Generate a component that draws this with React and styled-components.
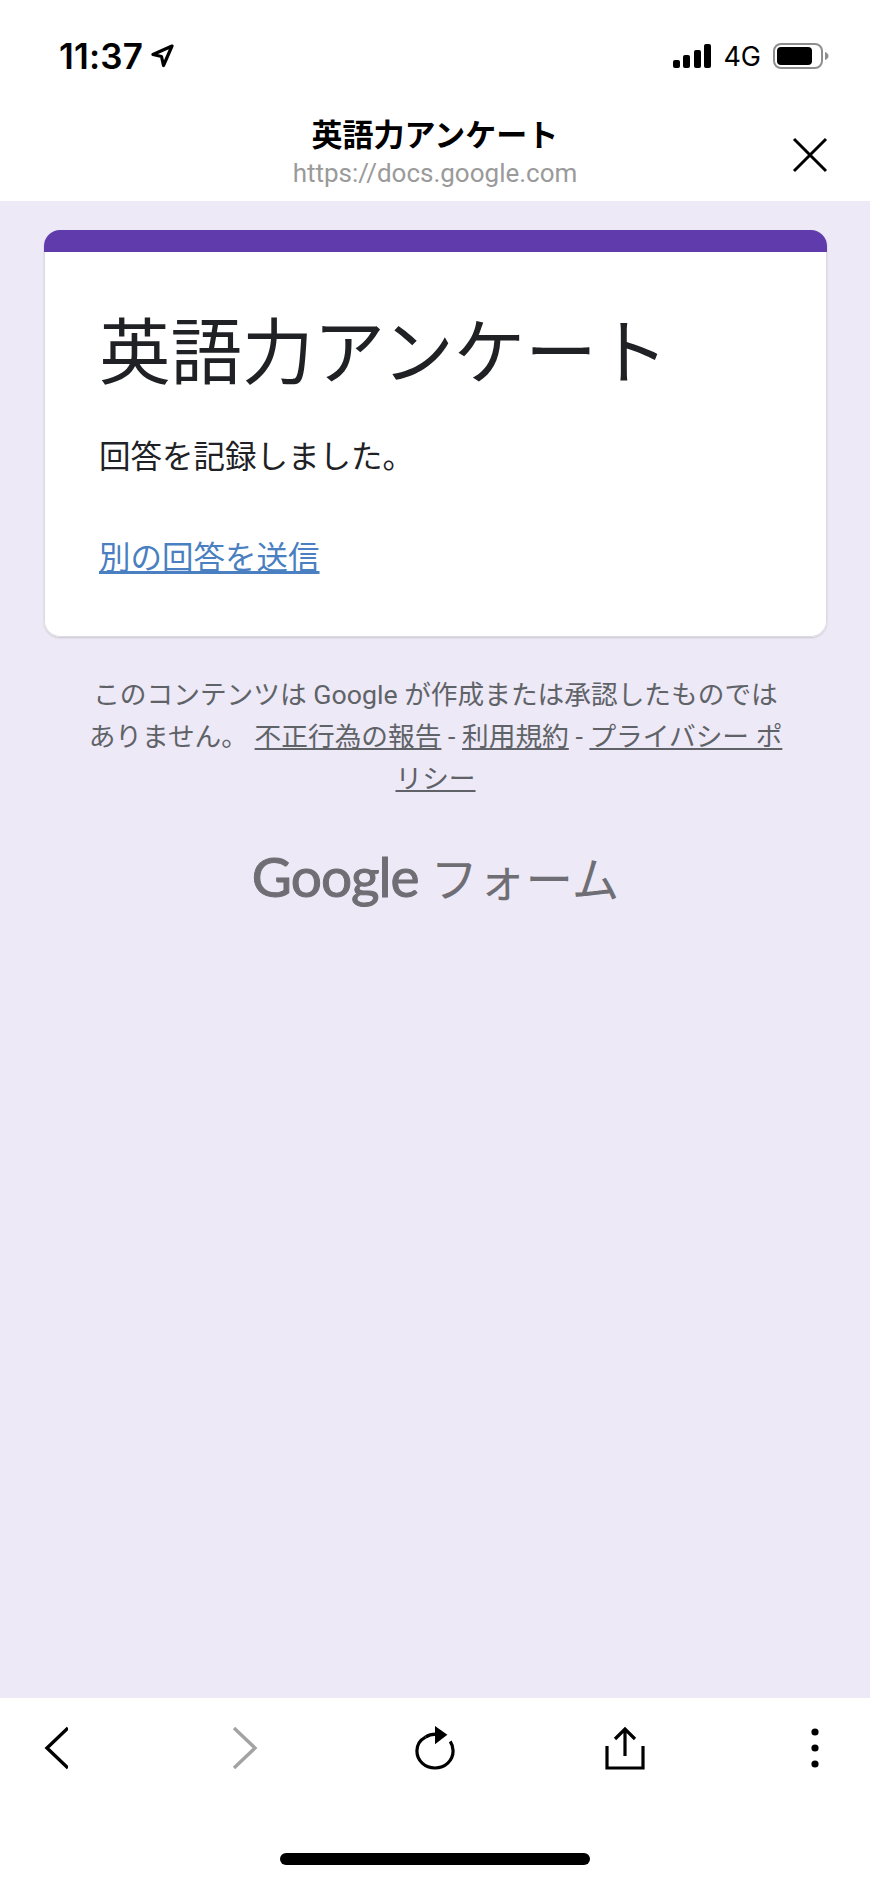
import styled, { createGlobalStyle } from "styled-components";

const GlobalStyle = createGlobalStyle`
  html, body {
    margin: 0;
    padding: 0;
    background: #fff;
  }
  body {
    font-family: "Noto Sans CJK JP", "Noto Sans", sans-serif;
  }
`;

const Phone = styled.div`
  width: 870px;
  height: 1883px;
  display: flex;
  flex-direction: column;
  overflow: hidden;
`;

const TopBar = styled.header`
  height: 201px;
  flex: none;
  background: #fff;
  display: flex;
  flex-direction: column;
`;

const StatusBar = styled.div`
  height: 113px;
  box-sizing: border-box;
  padding: 38px 41px 0 59px;
  display: flex;
  justify-content: space-between;
  align-items: flex-start;
`;

const StatusGroup = styled.div`
  display: flex;
  align-items: center;
  gap: ${(p) => p.$gap}px;
  height: 36px;
`;

const Time = styled.span`
  font-family: Inter, "Liberation Sans", sans-serif;
  font-size: 35px;
  font-weight: 600;
  letter-spacing: 0.2px;
  color: #000;
`;

const Network = styled.span`
  font-family: Inter, "Liberation Sans", sans-serif;
  font-size: 27px;
  font-weight: 400;
  color: #000;
`;

const TitleRow = styled.div`
  display: grid;
  grid-template-columns: 1fr auto 1fr;
  padding: 0 42px;
`;

const TitleBlock = styled.div`
  grid-column: 2;
  display: flex;
  flex-direction: column;
  align-items: center;
`;

const PageName = styled.div`
  font-size: 31px;
  font-weight: 700;
  line-height: 40px;
  color: #000;
`;

const PageUrl = styled.div`
  font-family: Roboto, "Liberation Sans", sans-serif;
  font-size: 26px;
  line-height: 30px;
  color: #9a9a9a;
  margin-top: 5px;
`;

const CloseButton = styled.div`
  grid-column: 3;
  justify-self: end;
  margin-top: 24px;
  display: flex;
`;

const Content = styled.main`
  flex: 1;
  background: #ede9f6;
  padding: 29px 43px 0 44px;
  display: flex;
  flex-direction: column;
`;

const Card = styled.section`
  border-radius: 16px;
  overflow: hidden;
  background: #fff;
  box-shadow: 0 1px 2px rgba(60, 64, 67, 0.2);
`;

const CardStripe = styled.div`
  height: 22px;
  background: #5f3bab;
`;

const CardBody = styled.div`
  height: 385px;
  box-sizing: border-box;
  padding: 51px 54px 0;
  border: 1px solid #dcdbe3;
  border-top: none;
  border-radius: 0 0 16px 16px;
`;

const CardTitle = styled.h1`
  margin: 0;
  font-size: 71.5px;
  font-weight: 400;
  line-height: 88px;
  color: #202124;
  white-space: nowrap;
`;

const Message = styled.p`
  margin: 40px 0 0;
  font-size: 31.5px;
  line-height: 46px;
  color: #202124;
`;

const AnotherLink = styled.a`
  display: inline-block;
  margin-top: 55px;
  font-size: 31.5px;
  line-height: 46px;
  color: #4a7fc1;
  text-decoration: underline;
`;

const Notice = styled.p`
  margin: 37px auto 0;
  width: 704px;
  text-align: center;
  font-family: Roboto, "Noto Sans CJK JP", sans-serif;
  font-size: 26.7px;
  line-height: 42px;
  color: #5f6368;
`;

const NoticeLink = styled.a`
  color: #5f6368;
  text-decoration: underline;
`;

const Brand = styled.div`
  margin-top: 41px;
  display: flex;
  justify-content: center;
  align-items: baseline;
  gap: 12px;
  color: #6f6e74;
`;

const BrandGoogle = styled.span`
  font-family: Lato, "Noto Sans", sans-serif;
  font-size: 55px;
  font-weight: 400;
  letter-spacing: -1px;
  line-height: 70px;
  -webkit-text-stroke: 1px #6f6e74;
`;

const BrandProduct = styled.span`
  font-size: 47.5px;
  font-weight: 400;
  line-height: 70px;
`;

const BottomBar = styled.footer`
  height: 185px;
  flex: none;
  background: #fff;
  display: flex;
  flex-direction: column;
  align-items: center;
`;

const Toolbar = styled.nav`
  align-self: stretch;
  display: flex;
  justify-content: space-between;
  padding: 26px 35px 0;
`;

const ToolButton = styled.div`
  width: 40px;
  height: 48px;
  display: flex;
  align-items: center;
  justify-content: center;
  color: ${(p) => (p.$disabled ? "#a3a3a3" : "#000")};
`;

const HomeIndicator = styled.div`
  width: 310px;
  height: 12px;
  margin-top: 81px;
  border-radius: 6px;
  background: #000;
`;

const NavArrow = () => (
  <svg width="24" height="24" viewBox="0 0 24 24" fill="none" stroke="#000" strokeWidth="3.2" strokeLinejoin="round">
    <path d="M22 2 L3 10.5 L11.5 12.5 L13.5 21.5 Z" />
  </svg>
);

const SignalBars = () => (
  <svg width="38" height="24" viewBox="0 0 38 24" fill="#000">
    <rect x="0" y="16" width="7" height="8" rx="2" />
    <rect x="10" y="11" width="7" height="13" rx="2" />
    <rect x="21" y="6" width="7" height="18" rx="2" />
    <rect x="31" y="0" width="7" height="24" rx="2" />
  </svg>
);

const Battery = () => (
  <svg width="56" height="26" viewBox="0 0 56 26">
    <rect x="1" y="1" width="48" height="24" rx="7" fill="none" stroke="#8e8e8e" strokeWidth="2" />
    <rect x="4" y="4" width="35" height="18" rx="4" fill="#000" />
    <path d="M52 9 C54.5 10 55.5 11.5 55.5 13 C55.5 14.5 54.5 16 52 17 Z" fill="#8e8e8e" />
  </svg>
);

const CloseIcon = () => (
  <svg width="36" height="36" viewBox="0 0 36 36" stroke="#000" strokeWidth="3" fill="none">
    <path d="M2 2 L34 34 M34 2 L2 34" />
  </svg>
);

const Chevron = ({ left }) => (
  <svg width="26" height="44" viewBox="0 0 26 44" fill="none" stroke="currentColor" strokeWidth="3.4">
    <path d={left ? "M26 2 L5 22 L26 42" : "M2 2 L23 22 L2 42"} />
  </svg>
);

const ReloadIcon = () => (
  <svg width="42" height="46" viewBox="0 0 42 46" fill="none">
    <path d="M11 11.5 C5.5 14.5 2 19.5 2 26 C2 36.5 10.5 44 21 44 C31.5 44 40 36.5 40 26 C40 22.5 39 19 37 16" stroke="#000" strokeWidth="3.4" />
    <path d="M11 11.5 C14 9.5 17.5 8.5 22 8.5" stroke="#000" strokeWidth="3.4" />
    <path d="M21 0 L34 9 L21 19 Z" fill="#000" />
  </svg>
);

const ShareIcon = () => (
  <svg width="40" height="44" viewBox="0 0 40 44" fill="none" stroke="#000" strokeWidth="3.2">
    <path d="M20 30 V3 M10 13 L20 3 L30 13" />
    <path d="M2 20 V42 H38 V20" />
  </svg>
);

const MoreIcon = () => (
  <svg width="8" height="40" viewBox="0 0 8 40" fill="#000">
    <circle cx="4" cy="4" r="3.6" />
    <circle cx="4" cy="20" r="3.6" />
    <circle cx="4" cy="36" r="3.6" />
  </svg>
);

const App = () => {
  return (
    <Phone>
      <GlobalStyle />
      <TopBar>
        <StatusBar>
          <StatusGroup $gap={7}>
            <Time>11:37</Time>
            <NavArrow />
          </StatusGroup>
          <StatusGroup $gap={12}>
            <SignalBars />
            <Network>4G</Network>
            <Battery />
          </StatusGroup>
        </StatusBar>
        <TitleRow>
          <TitleBlock>
            <PageName>英語力アンケート</PageName>
            <PageUrl>https://docs.google.com</PageUrl>
          </TitleBlock>
          <CloseButton>
            <CloseIcon />
          </CloseButton>
        </TitleRow>
      </TopBar>
      <Content>
        <Card>
          <CardStripe />
          <CardBody>
            <CardTitle>英語力アンケート</CardTitle>
            <Message>回答を記録しました。</Message>
            <AnotherLink>別の回答を送信</AnotherLink>
          </CardBody>
        </Card>
        <Notice>
          このコンテンツは Google が作成または承認したものではありません。
          {" "}
          <NoticeLink>不正行為の報告</NoticeLink> - <NoticeLink>利用規約</NoticeLink> -{" "}
          <NoticeLink>プライバシー ポリシー</NoticeLink>
        </Notice>
        <Brand>
          <BrandGoogle>Google</BrandGoogle>
          <BrandProduct>フォーム</BrandProduct>
        </Brand>
      </Content>
      <BottomBar>
        <Toolbar>
          <ToolButton>
            <Chevron left />
          </ToolButton>
          <ToolButton $disabled>
            <Chevron />
          </ToolButton>
          <ToolButton>
            <ReloadIcon />
          </ToolButton>
          <ToolButton>
            <ShareIcon />
          </ToolButton>
          <ToolButton>
            <MoreIcon />
          </ToolButton>
        </Toolbar>
        <HomeIndicator />
      </BottomBar>
    </Phone>
  );
};

export default App;
